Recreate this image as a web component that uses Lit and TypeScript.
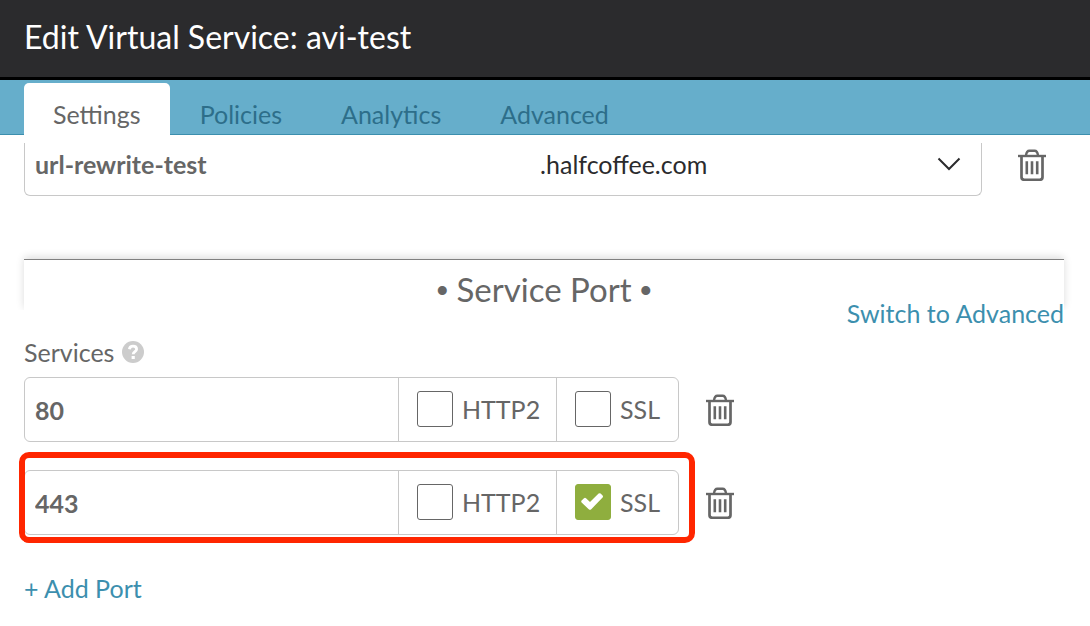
import { LitElement, html, css, nothing } from "lit";
import { customElement, property, state } from "lit/decorators.js";

@customElement("trash-button")
class TrashButton extends LitElement {
  @property() label = "Delete";

  static styles = css`
    :host {
      display: block;
      flex: none;
    }
    .button {
      display: block;
      padding: 0;
      border: 0;
      background: none;
      color: #666;
      cursor: pointer;
    }
    .icon {
      display: block;
      width: 28px;
      height: 32px;
    }
  `;

  render() {
    return html`
      <button class="button" type="button" aria-label=${this.label}>
        <svg class="icon" viewBox="0 0 28 32" fill="none" stroke="currentColor" stroke-width="2.4">
          <path d="M0 7H28" />
          <path d="M8 6.4C8.4 3.2 9.6 1.7 11.4 1.7H16.6C18.4 1.7 19.6 3.2 20 6.4" />
          <path d="M3.5 7V28Q3.5 30.8 6.3 30.8H21.7Q24.5 30.8 24.5 28V7" stroke-width="2.7" />
          <path d="M8.8 12.2V25.2M14 12.2V25.2M19.2 12.2V25.2" stroke-width="2.6" />
        </svg>
      </button>
    `;
  }
}

@customElement("port-row")
class PortRow extends LitElement {
  @property() port = "";
  @property({ type: Boolean }) http2 = false;
  @property({ type: Boolean }) ssl = false;
  @property({ type: Boolean }) highlighted = false;

  static styles = css`
    :host {
      display: flex;
      align-items: center;
      gap: 27px;
    }
    .frame {
      position: relative;
      flex: 0 1 655px;
      min-width: 0;
    }
    .fields {
      display: grid;
      grid-template-columns: 1fr 158px 122px;
      box-sizing: border-box;
      height: 65px;
      border: 1px solid #c8c8c8;
      border-radius: 6px;
      overflow: hidden;
    }
    .port {
      min-width: 0;
      padding: 0 10px;
      border: 0;
      outline: 0;
      background: none;
      color: #666;
      font: inherit;
      font-weight: 700;
    }
    .option {
      display: flex;
      align-items: center;
      gap: 9px;
      padding: 0 0 2px 18px;
      border-left: 1px solid #c8c8c8;
      line-height: 32px;
    }
    .check {
      appearance: none;
      flex: none;
      box-sizing: border-box;
      width: 36px;
      height: 36px;
      margin: 0;
      border: 1px solid #666;
      border-radius: 3px;
      background: #fff;
    }
    .check:checked {
      border-color: #8fae3e;
      background: #8fae3e;
    }
    .box {
      display: grid;
      flex: none;
    }
    .box > * {
      grid-area: 1 / 1;
    }
    .tick {
      width: 36px;
      height: 36px;
      pointer-events: none;
    }
    .marker {
      position: absolute;
      inset: -18px -16px -8px -5px;
      border: 6px solid #ff2600;
      border-radius: 10px;
      pointer-events: none;
    }
  `;

  private option(label: string, checked: boolean) {
    return html`
      <label class="option">
        <span class="box">
          <input class="check" type="checkbox" .checked=${checked} />
          ${checked
            ? html`<svg class="tick" viewBox="0 0 36 36">
                <path
                  d="M6.6 16.6L9 14.2Q10 13.4 11 14.2L15 18L23.6 9.6Q24.6 8.8 25.6 9.6L27.6 11.6Q28.4 12.6 27.6 13.6L16 25.4Q15 26.2 14 25.4L6.6 18.6Q5.8 17.6 6.6 16.6Z"
                  fill="#fff"
                />
              </svg>`
            : nothing}
        </span>
        ${label}
      </label>
    `;
  }

  render() {
    return html`
      <div class="frame">
        <div class="fields">
          <input class="port" aria-label="Port" .value=${this.port} />
          ${this.option("HTTP2", this.http2)} ${this.option("SSL", this.ssl)}
        </div>
        ${this.highlighted ? html`<div class="marker"></div>` : nothing}
      </div>
      <trash-button label="Delete port"></trash-button>
    `;
  }
}

@customElement("app-root")
class AppRoot extends LitElement {
  @state() private tabs = ["Settings", "Policies", "Analytics", "Advanced"];
  @state() private active = "Settings";
  @state() private services = [
    { port: "80", http2: false, ssl: false, highlighted: false },
    { port: "443", http2: false, ssl: true, highlighted: true },
  ];

  static styles = css`
    :host {
      display: block;
      min-height: 100vh;
      background: #fff;
      color: #666;
      font: 25px/32px Lato, "Open Sans", sans-serif;
    }
    .header {
      padding: 17px 24px 20px;
      border-bottom: 3px solid #000;
      background: #2b2b2d;
      color: #fff;
    }
    .title {
      margin: 0;
      font-size: 32px;
      line-height: 40px;
      font-weight: 400;
    }
    .tabs {
      display: flex;
      gap: 1px;
      padding: 3px 24px 0;
      background: #66aecb;
      box-shadow: inset 0 -1px #3c8fae;
    }
    .tab {
      padding: 15px 29px 5px;
      border: 0;
      border-radius: 5px 5px 0 0;
      background: none;
      color: #2d6e8a;
      font: inherit;
      cursor: pointer;
    }
    .tab.active {
      background: #fff;
      color: #666;
    }
    .content {
      padding: 8px 26px 20px 24px;
    }
    .domain-row {
      display: flex;
      align-items: center;
      gap: 36px;
      padding-right: 18px;
    }
    .domain {
      display: grid;
      grid-template-columns: 9fr 8fr;
      flex: 1;
      box-sizing: border-box;
      height: 53px;
      padding-bottom: 10px;
      border: 1px solid #c8c8c8;
      border-top: 0;
      border-radius: 0 0 6px 6px;
    }
    .name {
      min-width: 0;
      padding: 0 10px;
      border: 0;
      outline: 0;
      background: none;
      color: #666;
      font: inherit;
      font-weight: 700;
    }
    .picker {
      display: grid;
      align-items: center;
    }
    .picker > * {
      grid-area: 1 / 1;
    }
    .suffix {
      appearance: none;
      height: 100%;
      padding: 0 48px 0 9px;
      border: 0;
      outline: 0;
      background: none;
      color: #2b2b2d;
      font: inherit;
    }
    .chevron {
      justify-self: end;
      width: 24px;
      height: 14px;
      margin-right: 20px;
      pointer-events: none;
    }
    .domain-row trash-button {
      padding-bottom: 10px;
    }
    .section {
      margin: 63px 0 0;
      padding: 9px 0 0;
      height: 41px;
      border-top: 1px solid #808080;
      box-shadow: 0 -2px 8px rgba(0, 0, 0, 0.14);
      clip-path: inset(-12px -12px 0 -12px);
      text-align: center;
      font-size: 33px;
      line-height: 40px;
      font-weight: 400;
    }
    .dot {
      font-family: "Liberation Sans", sans-serif;
    }
    .mode {
      display: flex;
      justify-content: flex-end;
      margin-top: -13px;
    }
    .link {
      color: #3c8fae;
      text-decoration: none;
    }
    .services {
      display: flex;
      align-items: center;
      gap: 8px;
      margin-top: 7px;
    }
    .help {
      width: 22px;
      height: 22px;
    }
    .ports {
      display: grid;
      gap: 28px;
      margin: 9px 0 37px;
    }
  `;

  render() {
    return html`
      <header class="header"><h1 class="title">Edit Virtual Service: avi-test</h1></header>
      <nav class="tabs">
        ${this.tabs.map(
          (tab) => html`<button
            class="tab ${tab === this.active ? "active" : ""}"
            @click=${() => (this.active = tab)}
          >${tab}</button>`
        )}
      </nav>
      <main class="content">
        <div class="domain-row">
          <div class="domain">
            <input class="name" aria-label="Application domain name" value="url-rewrite-test" />
            <div class="picker">
              <select class="suffix" aria-label="Domain">
                <option>.halfcoffee.com</option>
              </select>
              <svg class="chevron" viewBox="0 0 24 14" fill="none" stroke="#2b2b2d" stroke-width="2">
                <path d="M1.5 1.5L12 12L22.5 1.5" />
              </svg>
            </div>
          </div>
          <trash-button label="Delete domain"></trash-button>
        </div>
        <h2 class="section"><span class="dot">•</span> Service Port <span class="dot">•</span></h2>
        <div class="mode"><a class="link" href="#advanced">Switch to Advanced</a></div>
        <div class="services">
          <span>Services</span>
          <svg class="help" viewBox="0 0 22 22" fill="none" role="img" aria-label="Help">
            <circle cx="11" cy="11" r="11" fill="#ccc" />
            <path
              d="M7.4 8.2C7.7 6.2 9 5.2 11 5.2C13.2 5.2 14.6 6.4 14.6 8.2C14.6 10.6 11.2 10.7 11.2 13.2"
              stroke="#fff"
              stroke-width="2.8"
            />
            <path d="M9.6 15H12.8V18H9.6Z" fill="#fff" />
          </svg>
        </div>
        <div class="ports">
          ${this.services.map(
            (s) => html`<port-row
              .port=${s.port}
              .http2=${s.http2}
              .ssl=${s.ssl}
              .highlighted=${s.highlighted}
            ></port-row>`
          )}
        </div>
        <a class="link" href="#add">+ Add Port</a>
      </main>
    `;
  }
}
